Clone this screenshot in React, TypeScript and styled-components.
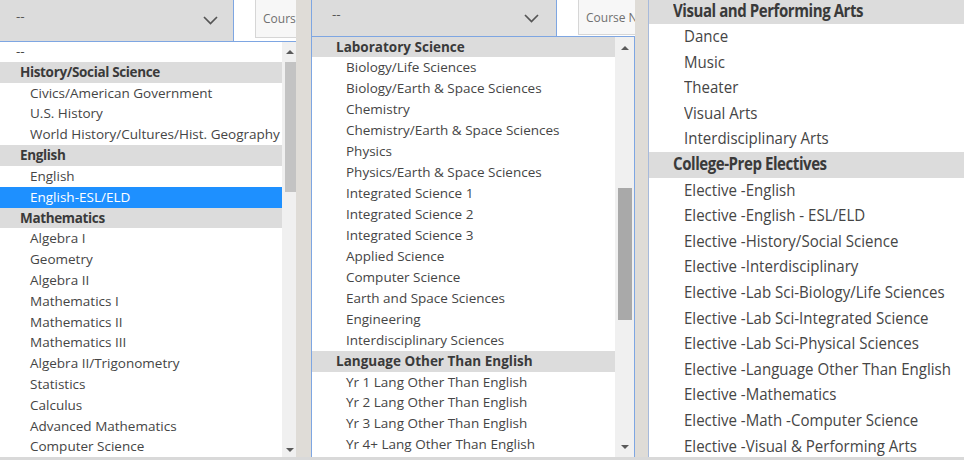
import React from 'react';
import styled, { createGlobalStyle } from 'styled-components';

const GlobalStyle = createGlobalStyle`
  html, body { margin: 0; padding: 0; background: #fff; }
  body { font-family: "Open Sans", "Noto Sans", sans-serif; }
  * { box-sizing: border-box; }
`;

type Kind = 'group' | 'item' | 'selected' | 'placeholder';
type Row = { t: string; k: Kind };

const g = (t: string): Row => ({ t, k: 'group' });
const i = (t: string): Row => ({ t, k: 'item' });

const leftRows: Row[] = [
  { t: '--', k: 'placeholder' },
  g('History/Social Science'),
  i('Civics/American Government'),
  i('U.S. History'),
  i('World History/Cultures/Hist. Geography'),
  g('English'),
  i('English'),
  { t: 'English-ESL/ELD', k: 'selected' },
  g('Mathematics'),
  i('Algebra I'),
  i('Geometry'),
  i('Algebra II'),
  i('Mathematics I'),
  i('Mathematics II'),
  i('Mathematics III'),
  i('Algebra II/Trigonometry'),
  i('Statistics'),
  i('Calculus'),
  i('Advanced Mathematics'),
  i('Computer Science'),
];

const middleRows: Row[] = [
  g('Laboratory Science'),
  i('Biology/Life Sciences'),
  i('Biology/Earth & Space Sciences'),
  i('Chemistry'),
  i('Chemistry/Earth & Space Sciences'),
  i('Physics'),
  i('Physics/Earth & Space Sciences'),
  i('Integrated Science 1'),
  i('Integrated Science 2'),
  i('Integrated Science 3'),
  i('Applied Science'),
  i('Computer Science'),
  i('Earth and Space Sciences'),
  i('Engineering'),
  i('Interdisciplinary Sciences'),
  g('Language Other Than English'),
  i('Yr 1 Lang Other Than English'),
  i('Yr 2 Lang Other Than English'),
  i('Yr 3 Lang Other Than English'),
  i('Yr 4+ Lang Other Than English'),
];

const rightRows: Row[] = [
  g('Visual and Performing Arts'),
  i('Dance'),
  i('Music'),
  i('Theater'),
  i('Visual Arts'),
  i('Interdisciplinary Arts'),
  g('College-Prep Electives'),
  i('Elective -English'),
  i('Elective -English - ESL/ELD'),
  i('Elective -History/Social Science'),
  i('Elective -Interdisciplinary'),
  i('Elective -Lab Sci-Biology/Life Sciences'),
  i('Elective -Lab Sci-Integrated Science'),
  i('Elective -Lab Sci-Physical Sciences'),
  i('Elective -Language Other Than English'),
  i('Elective -Mathematics'),
  i('Elective -Math -Computer Science'),
  i('Elective -Visual & Performing Arts'),
];

const BLUE = '#7ea6e2';

const Page = styled.div`
  width: 964px;
  height: 460px;
  overflow: hidden;
  display: flex;
  flex-direction: column;
  background: #fff;
`;

const Strip = styled.div`
  display: flex;
  height: 457px;
  flex: none;
`;

const BottomEdge = styled.div`
  height: 3px;
  flex: none;
  background: #d9d9d9;
`;

const Gutter = styled.div<{ $w: number }>`
  flex: 0 0 ${(p) => p.$w}px;
  background: #dfdcd7;
`;

const Panel = styled.div<{ $w?: number; $edge?: boolean }>`
  display: flex;
  flex-direction: column;
  flex: ${(p) => (p.$w ? `0 0 ${p.$w}px` : '1 1 auto')};
  min-width: 0;
  background: #fff;
  overflow: hidden;
  ${(p) => (p.$edge ? 'border-left: 1px solid #a7badb;' : '')}
`;

const TopBar = styled.div<{ $h: number }>`
  display: flex;
  align-items: flex-start;
  height: ${(p) => p.$h}px;
  flex: none;
`;

const SelectBox = styled.div<{ $w: number; $left?: boolean; $padL: number; $padR: number }>`
  flex: 0 0 ${(p) => p.$w}px;
  height: 100%;
  background: #dcdcdc;
  border-right: 1px solid ${BLUE};
  ${(p) => (p.$left ? `border-left: 1px solid ${BLUE};` : '')}
  display: flex;
  align-items: center;
  justify-content: space-between;
  padding: 0 ${(p) => p.$padR}px 0 ${(p) => p.$padL}px;
  color: #555;
  font-size: 13.5px;
`;

const SelectValue = styled.span`
  margin-bottom: 9px;
`;

const Chevron = styled.svg`
  flex: none;
  display: block;
`;

const InputBox = styled.div<{ $gap: number; $h: number }>`
  flex: 1 1 auto;
  min-width: 0;
  margin-left: ${(p) => p.$gap}px;
  height: ${(p) => p.$h}px;
  border: 1px solid #d6d6d6;
  border-top: none;
  border-right: none;
  background: #f7f7f7;
  color: #707070;
  font-size: 12px;
  display: flex;
  align-items: center;
  padding-left: 7px;
  white-space: nowrap;
  overflow: hidden;
`;

const InputText = styled.span`
  display: inline-block;
  transform: scaleY(1.1);
`;

const ListBox = styled.div<{ $sides?: boolean }>`
  flex: 1 1 auto;
  min-height: 0;
  display: flex;
  border-top: 1px solid ${BLUE};
  ${(p) => (p.$sides ? `border-left: 1px solid ${BLUE}; border-right: 1px solid ${BLUE};` : '')}
  overflow: hidden;
`;

const Options = styled.div<{
  $rowH: number;
  $fs: number;
  $groupPad: number;
  $itemPad: number;
  $phPad?: number;
  $groupLs?: number;
  $shift?: number;
}>`
  flex: 1 1 auto;
  min-width: 0;
  overflow: hidden;
  margin-top: ${(p) => p.$shift ?? 0}px;
  --row-h: ${(p) => p.$rowH}px;
  --fs: ${(p) => p.$fs}px;
  --group-pad: ${(p) => p.$groupPad}px;
  --item-pad: ${(p) => p.$itemPad}px;
  --ph-pad: ${(p) => p.$phPad ?? p.$groupPad}px;
  --group-ls: ${(p) => p.$groupLs ?? 0}px;
`;

const Option = styled.div<{ $kind: Kind }>`
  height: var(--row-h);
  line-height: var(--row-h);
  font-size: var(--fs);
  white-space: nowrap;
  overflow: hidden;
  padding-left: ${(p) =>
    p.$kind === 'group' ? 'var(--group-pad)' : p.$kind === 'placeholder' ? 'var(--ph-pad)' : 'var(--item-pad)'};
  background: ${(p) => (p.$kind === 'group' ? '#dcdcdc' : p.$kind === 'selected' ? '#1e90ff' : 'transparent')};
  color: ${(p) => (p.$kind === 'selected' ? '#fff' : p.$kind === 'group' ? '#3a3a3a' : '#454545')};
  font-weight: ${(p) => (p.$kind === 'group' ? 700 : 400)};
  letter-spacing: ${(p) => (p.$kind === 'group' ? 'var(--group-ls)' : 'normal')};
`;

const Label = styled.span<{ $stretch?: number }>`
  display: inline-block;
  transform: scaleY(${(p) => p.$stretch ?? 1});
  transform-origin: 50% 55%;
`;

const Scrollbar = styled.div<{ $w: number }>`
  flex: 0 0 ${(p) => p.$w}px;
  background: #f0f0f0;
  display: flex;
  flex-direction: column;
`;

const ArrowBtn = styled.div<{ $dir: 'up' | 'down'; $h: number; $shift: number }>`
  flex: 0 0 ${(p) => p.$h}px;
  display: flex;
  align-items: center;
  justify-content: center;
  padding-left: ${(p) => p.$shift}px;
  &::before {
    content: '';
    width: 0;
    height: 0;
    border-left: 4px solid transparent;
    border-right: 4px solid transparent;
    ${(p) => (p.$dir === 'up' ? 'border-bottom: 4px solid #5a5a5a;' : 'border-top: 4px solid #5a5a5a;')}
  }
`;

const Track = styled.div`
  flex: 1 1 auto;
  min-height: 0;
`;

const Thumb = styled.div<{ $top: number; $h: number; $w: number; $left: number; $color: string }>`
  margin-top: ${(p) => p.$top}px;
  margin-left: ${(p) => p.$left}px;
  width: ${(p) => p.$w}px;
  height: ${(p) => p.$h}px;
  background: ${(p) => p.$color};
`;

const ChevronIcon = () => (
  <Chevron width="15" height="9" viewBox="0 0 15 9">
    <polyline points="1,1 7.5,7.5 14,1" fill="none" stroke="#555" strokeWidth="1.7" />
  </Chevron>
);

const OptionList = ({ rows, stretch }: { rows: Row[]; stretch?: number }) => (
  <>
    {rows.map((r, idx) => (
      <Option key={idx} $kind={r.k}>
        <Label $stretch={stretch}>{r.t}</Label>
      </Option>
    ))}
  </>
);

export default function App() {
  return (
    <>
      <GlobalStyle />
      <Page>
        <Strip>
          <Panel $w={296}>
            <TopBar $h={41}>
              <SelectBox $w={234} $padL={16} $padR={15}>
                <SelectValue>--</SelectValue>
                <ChevronIcon />
              </SelectBox>
              <InputBox $gap={21} $h={38}>
                <InputText>Cours</InputText>
              </InputBox>
            </TopBar>
            <ListBox>
              <Options $rowH={20.82} $fs={13.5} $groupPad={20} $itemPad={30} $phPad={16} $groupLs={-0.35} $shift={-1}>
                <OptionList rows={leftRows} />
              </Options>
              <Scrollbar $w={14}>
                <ArrowBtn $dir="up" $h={20} $shift={2} />
                <Thumb $top={0} $h={130} $w={11} $left={3} $color="#c3c3c3" />
                <Track />
                <ArrowBtn $dir="down" $h={15} $shift={2} />
              </Scrollbar>
            </ListBox>
          </Panel>
          <Gutter $w={15} />
          <Panel $w={324}>
            <TopBar $h={36}>
              <SelectBox $w={246} $left $padL={20} $padR={17}>
                <SelectValue>--</SelectValue>
                <ChevronIcon />
              </SelectBox>
              <InputBox $gap={21} $h={35}>
                <InputText>Course N</InputText>
              </InputBox>
            </TopBar>
            <ListBox $sides>
              <Options $rowH={20.95} $fs={13.5} $groupPad={24} $itemPad={34} $shift={-0.5}>
                <OptionList rows={middleRows} />
              </Options>
              <Scrollbar $w={19}>
                <ArrowBtn $dir="up" $h={22} $shift={1} />
                <Thumb $top={129} $h={132} $w={14} $left={3} $color="#a9a9a9" />
                <Track />
                <ArrowBtn $dir="down" $h={20} $shift={1} />
              </Scrollbar>
            </ListBox>
          </Panel>
          <Gutter $w={13} />
          <Panel $edge>
            <Options $rowH={25.6} $fs={15.05} $groupPad={24} $itemPad={35} $groupLs={-0.45} $shift={-1.5}>
              <OptionList rows={rightRows} stretch={1.12} />
            </Options>
          </Panel>
        </Strip>
        <BottomEdge />
      </Page>
    </>
  );
}
